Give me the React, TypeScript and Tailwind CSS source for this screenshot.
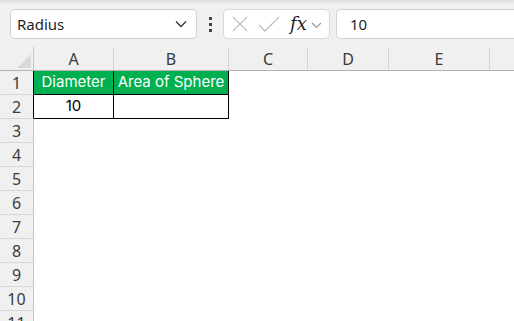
import React from 'react';

const font = { fontFamily: '"Noto Sans", "Open Sans", sans-serif' };
const cellFont = { fontFamily: 'Inter, "Noto Sans", sans-serif' };

const cols = [
  { name: 'A', w: 'w-[80px]' },
  { name: 'B', w: 'w-[115px]' },
  { name: 'C', w: 'w-[79px]' },
  { name: 'D', w: 'w-[81px]' },
  { name: 'E', w: 'w-[101px]' },
];

function Toolbar() {
  return (
    <div className="relative h-[47px] bg-[#f0f0f0] flex items-start pt-[9px] pl-[10px]">
      <div className="absolute top-0 left-0 right-0 h-[4px] bg-gradient-to-b from-[#dcdcdc] to-[#f0f0f0]" />
      <div className="relative w-[187px] h-[30px] bg-white border border-[#d1d1d1] rounded-[5px] flex items-center pl-[6px] pr-[8px] justify-between">
        <span className="text-[15px] text-[#1f1f1f]">Radius</span>
        <svg width="12" height="8" viewBox="0 0 12 8" className="mr-[1px]">
          <path d="M1 1.5 L6 6.5 L11 1.5" fill="none" stroke="#333" strokeWidth="1.3" />
        </svg>
      </div>
      <div className="relative w-[26px] h-[30px] flex flex-col items-center justify-center gap-[3px]">
        <span className="w-[3px] h-[3px] bg-[#444]" />
        <span className="w-[3px] h-[3px] bg-[#444]" />
        <span className="w-[3px] h-[3px] bg-[#444]" />
      </div>
      <div className="relative w-[107px] h-[30px] bg-white border border-[#d9d9d9] rounded-[5px] flex items-center pl-[8px]">
        <svg width="16" height="16" viewBox="0 0 16 16">
          <path d="M1 1 L15 15 M15 1 L1 15" stroke="#bdbdbd" strokeWidth="1.3" />
        </svg>
        <svg width="22" height="16" viewBox="0 0 22 16" className="ml-[10px]">
          <path d="M1 9 L7 15 L21 1" fill="none" stroke="#bdbdbd" strokeWidth="1.3" />
        </svg>
        <span
          className="ml-[10px] text-[18px] italic text-[#222] leading-none"
          style={{ fontFamily: '"DejaVu Serif", "Liberation Serif", serif' }}
        >
          fx
        </span>
        <svg width="11" height="7" viewBox="0 0 11 7" className="ml-[4px] mt-[2px]">
          <path d="M1 1 L5.5 5.5 L10 1" fill="none" stroke="#999" strokeWidth="1.1" />
        </svg>
      </div>
      <div className="relative ml-[6px] flex-1 h-[30px] bg-white border border-[#d1d1d1] border-r-0 rounded-l-[5px] flex items-center pl-[13px]">
        <span className="text-[15px] text-[#1f1f1f]">10</span>
      </div>
    </div>
  );
}

function HeaderRow() {
  return (
    <div className="flex h-[24px] bg-[#f0f0f0] border-b border-[#b3b3b3]">
      <div className="relative w-[34px] shrink-0 border-r border-[#c6c6c6]">
        <svg width="14" height="14" viewBox="0 0 14 14" className="absolute right-[2px] bottom-[2px]">
          <path d="M14 0 L14 14 L0 14 Z" fill="#dadada" />
        </svg>
      </div>
      {cols.map((c) => (
        <div
          key={c.name}
          className={`${c.w} shrink-0 border-r border-[#d6d6d6] flex items-center justify-center text-[16px] text-[#3b3b3b]`}
        >
          {c.name}
        </div>
      ))}
      <div className="flex-1" />
    </div>
  );
}

function Row({ n }: { n: number }) {
  const boxed = n <= 2;
  return (
    <div className="flex h-[24px]">
      <div
        className={`w-[34px] shrink-0 bg-[#f0f0f0] border-r border-b border-b-[#d6d6d6] ${
          boxed ? 'border-r-black' : 'border-r-[#c6c6c6]'
        } flex items-center justify-center text-[16px] text-[#3b3b3b]`}
      >
        {n}
      </div>
      {n === 1 && (
        <>
          <div
            className="w-[80px] shrink-0 bg-[#00b050] border-r border-b border-black flex items-center justify-center text-[15px] text-white"
            style={cellFont}
          >
            Diameter
          </div>
          <div
            className="w-[115px] shrink-0 bg-[#00b050] border-r border-b border-black flex items-center justify-center text-[15px] text-white"
            style={cellFont}
          >
            Area of Sphere
          </div>
        </>
      )}
      {n === 2 && (
        <>
          <div
            className="w-[80px] shrink-0 bg-white border-r border-b border-black flex items-center justify-center text-[15px] text-black"
            style={cellFont}
          >
            10
          </div>
          <div className="w-[115px] shrink-0 bg-white border-r border-b border-black" />
        </>
      )}
      <div className="flex-1 bg-white" />
    </div>
  );
}

export default function App() {
  return (
    <div className="w-[514px] h-[321px] overflow-hidden bg-white" style={font}>
      <Toolbar />
      <HeaderRow />
      {[1, 2, 3, 4, 5, 6, 7, 8, 9, 10, 11].map((n) => (
        <Row key={n} n={n} />
      ))}
    </div>
  );
}
